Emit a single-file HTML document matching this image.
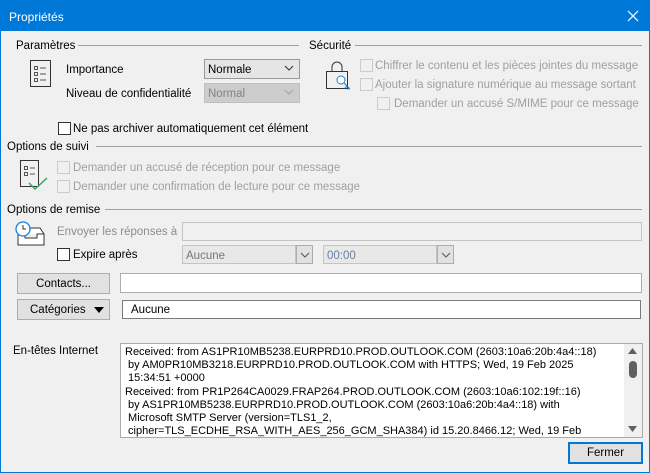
<!DOCTYPE html>
<html><head><meta charset="utf-8"><style>
*{box-sizing:border-box;margin:0;padding:0}
body{width:650px;height:473px;overflow:hidden;background:#f0f0f0;font-family:"Liberation Sans",sans-serif;font-size:11.5px;color:#000;position:relative}
.a{position:absolute;white-space:nowrap}
.t{position:absolute;white-space:nowrap;line-height:14px;margin-top:1px}
.g{color:#a0a0a0}
.line{position:absolute;height:1px;background:#a0a0a0}
.cb{position:absolute;width:13px;height:13px;border:1px solid #333;background:#fff}
.cbd{position:absolute;width:13px;height:13px;border:1px solid #ccc;background:#f0f0f0}
.box{position:absolute;border:1px solid #adadad;background:#fff}
.sel{position:absolute;border:1px solid #adadad;background:#e5e5e5}
.btn{position:absolute;border:1px solid #adadad;background:#e1e1e1;text-align:center}
</style></head><body>
<div class="a" style="left:0;top:0;width:650px;height:31px;background:#0078d7"></div>
<div class="a" style="left:0;top:31px;width:1px;height:442px;background:#0078d7"></div>
<div class="a" style="left:649px;top:31px;width:1px;height:442px;background:#0078d7"></div>
<div class="a" style="left:0;top:472px;width:650px;height:1px;background:#0078d7"></div>
<div class="t" style="left:9px;top:9px;color:#fff;font-size:12px">Propriétés</div>
<svg class="a" style="left:627px;top:10px" width="12" height="12"><path d="M1 1L11 11M11 1L1 11" stroke="#fff" stroke-width="1.2"/></svg>

<div class="t" style="left:16px;top:38px">Paramètres</div>
<div class="line" style="left:78px;top:45px;width:221px"></div>
<div class="t" style="left:309px;top:38px">Sécurité</div>
<div class="line" style="left:355px;top:45px;width:287px"></div>

<svg class="a" style="left:29px;top:59px" width="24" height="30"><rect x="1.5" y="1.5" width="20" height="26" fill="none" stroke="#333"/><g fill="none" stroke="#555"><rect x="5.5" y="7.5" width="3" height="3"/><rect x="5.5" y="13.5" width="3" height="3"/><rect x="5.5" y="19.5" width="3" height="3"/><path d="M11 9h6M11 15h6M11 21h6"/></g></svg>
<div class="t" style="left:66px;top:62px">Importance</div>
<div class="sel" style="left:204px;top:59px;width:96px;height:20px;border-color:#999"></div>
<div class="t" style="left:208px;top:62px">Normale</div>
<svg class="a" style="left:284px;top:65px" width="10" height="6"><path d="M1 1l4 4 4-4" fill="none" stroke="#333"/></svg>
<div class="t" style="left:66px;top:86px">Niveau de confidentialité</div>
<div class="sel" style="left:204px;top:83px;width:96px;height:20px;background:#ccc;border-color:#bfbfbf"></div>
<div class="t g" style="left:208px;top:86px;color:#838383">Normal</div>
<svg class="a" style="left:284px;top:89px" width="10" height="6"><path d="M1 1l4 4 4-4" fill="none" stroke="#a0a0a0"/></svg>
<div class="cb" style="left:58px;top:122px"></div>
<div class="t" style="left:73px;top:121px">Ne pas archiver automatiquement cet élément</div>

<svg class="a" style="left:323px;top:61px" width="30" height="31"><path d="M9 10V6a5 5 0 0 1 10 0v4" fill="none" stroke="#333"/><path d="M3.5 10.5h21v17h-21z" fill="none" stroke="#333"/><circle cx="18" cy="19" r="4" fill="#fff" stroke="#1a7fd4"/><path d="M21 22l6 6M24 25l-2 2M26 27l-1.5 1.5" stroke="#1a7fd4" fill="none"/></svg>
<div class="cbd" style="left:360px;top:59px"></div>
<div class="t g" style="left:375px;top:58px">Chiffrer le contenu et les pièces jointes du message</div>
<div class="cbd" style="left:360px;top:78px"></div>
<div class="t g" style="left:375px;top:77px">Ajouter la signature numérique au message sortant</div>
<div class="cbd" style="left:377px;top:97px"></div>
<div class="t g" style="left:394px;top:96px">Demander un accusé S/MIME pour ce message</div>

<div class="t" style="left:7px;top:139px">Options de suivi</div>
<div class="line" style="left:96px;top:146px;width:546px"></div>
<svg class="a" style="left:19px;top:159px" width="30" height="34"><path d="M1.5 1.5h18v26h-18z" fill="none" stroke="#333"/><g fill="none" stroke="#555"><rect x="5.5" y="7.5" width="3" height="3"/><rect x="5.5" y="13.5" width="3" height="3"/><path d="M11 9h5M11 15h5"/></g><path d="M10 24l6 6L28 19" fill="none" stroke="#3aa55a" stroke-width="1.5"/></svg>
<div class="cbd" style="left:57px;top:161px"></div>
<div class="t g" style="left:73px;top:160px">Demander un accusé de réception pour ce message</div>
<div class="cbd" style="left:57px;top:180px"></div>
<div class="t g" style="left:73px;top:179px">Demander une confirmation de lecture pour ce message</div>

<div class="t" style="left:7px;top:202px">Options de remise</div>
<div class="line" style="left:105px;top:209px;width:537px"></div>
<svg class="a" style="left:14px;top:220px" width="34" height="28"><path d="M4 14l4-6h18l4 6v11H4z M4 14h7v4h12v-4h7" fill="#fff" stroke="#333"/><circle cx="9" cy="9" r="7" fill="#fff" stroke="#1a7fd4" stroke-width="1.3"/><path d="M9 5v4h3" fill="none" stroke="#333"/></svg>
<div class="t g" style="left:57px;top:224px;color:#8c8c8c">Envoyer les réponses à</div>
<div class="box" style="left:182px;top:222px;width:460px;height:19px;background:#f0f0f0;border-color:#c4c4c4"></div>
<div class="cb" style="left:57px;top:248px"></div>
<div class="t" style="left:73px;top:247px">Expire après</div>
<div class="box" style="left:182px;top:245px;width:114px;height:19px;background:#e8e8e8;border-color:#c4c4c4"></div>
<div class="t" style="left:186px;top:248px;color:#777">Aucune</div>
<div class="sel" style="left:296px;top:245px;width:17px;height:19px;background:#e1e1e1"></div>
<svg class="a" style="left:300px;top:252px" width="10" height="6"><path d="M1 1l4 4 4-4" fill="none" stroke="#555"/></svg>
<div class="box" style="left:323px;top:245px;width:114px;height:19px;background:#e8e8e8;border-color:#c4c4c4"></div>
<div class="t" style="left:327px;top:248px;color:#6a7fa0">00:00</div>
<div class="sel" style="left:437px;top:245px;width:17px;height:19px;background:#e1e1e1"></div>
<svg class="a" style="left:441px;top:252px" width="10" height="6"><path d="M1 1l4 4 4-4" fill="none" stroke="#555"/></svg>

<div class="btn" style="left:17px;top:273px;width:93px;height:21px;line-height:20px">Contacts...</div>
<div class="box" style="left:120px;top:273px;width:522px;height:20px"></div>
<div class="btn" style="left:17px;top:299px;width:93px;height:21px;line-height:20px;text-align:left;padding-left:12px">Catégories</div>
<svg class="a" style="left:94px;top:307px" width="10" height="6"><path d="M0 0h10L5 6z" fill="#000"/></svg>
<div class="box" style="left:122px;top:300px;width:519px;height:19px;border-color:#7a7a7a"></div>
<div class="t" style="left:131px;top:302px">Aucune</div>

<div class="t" style="left:13px;top:343px">En-têtes Internet</div>
<div class="box" style="left:120px;top:343px;width:523px;height:95px;border-color:#aaa"></div>
<div class="a" style="left:125px;top:346px;font-size:11px;line-height:13.2px;white-space:pre">Received: from AS1PR10MB5238.EURPRD10.PROD.OUTLOOK.COM (2603:10a6:20b:4a4::18)
 by AM0PR10MB3218.EURPRD10.PROD.OUTLOOK.COM with HTTPS; Wed, 19 Feb 2025
 15:34:51 +0000
Received: from PR1P264CA0029.FRAP264.PROD.OUTLOOK.COM (2603:10a6:102:19f::16)
 by AS1PR10MB5238.EURPRD10.PROD.OUTLOOK.COM (2603:10a6:20b:4a4::18) with
 Microsoft SMTP Server (version=TLS1_2,
 cipher=TLS_ECDHE_RSA_WITH_AES_256_GCM_SHA384) id 15.20.8466.12; Wed, 19 Feb</div>
<div class="a" style="left:624px;top:344px;width:18px;height:93px;background:#f0f0f0"></div>
<svg class="a" style="left:628px;top:348px" width="10" height="6"><path d="M0 6h9L4.5 0z" fill="#606060"/></svg>
<div class="a" style="left:629px;top:361px;width:8px;height:17px;border-radius:4px;background:#606060"></div>
<svg class="a" style="left:628px;top:426px" width="10" height="6"><path d="M0 0h9L4.5 6z" fill="#606060"/></svg>

<div class="btn" style="left:568px;top:442px;width:75px;height:22px;line-height:19px;border:2px solid #0078d7">Fermer</div>
</body></html>
